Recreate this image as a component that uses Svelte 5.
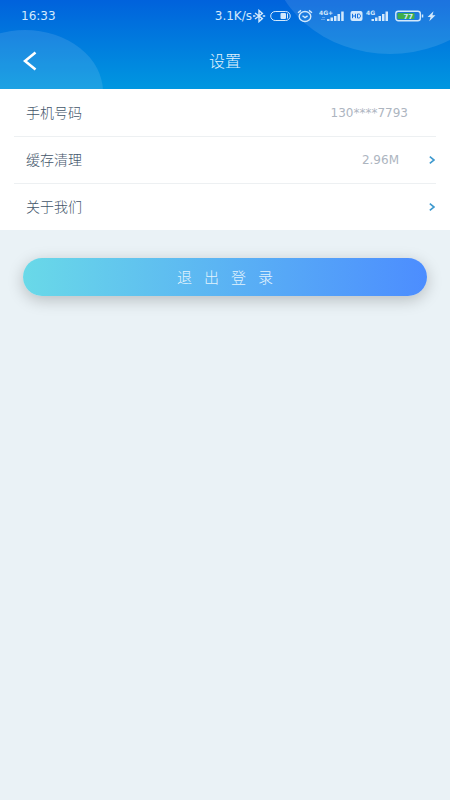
<script lang="ts">
  type Item = { label: string; value?: string; link: boolean };

  const items: Item[] = [
    { label: '手机号码', value: '130****7793', link: false },
    { label: '缓存清理', value: '2.96M', link: true },
    { label: '关于我们', link: true }
  ];
</script>

<header>
  <div class="status">
    <span>16:33</span>
    <div class="status-right">
      <span>3.1K/s</span>
      <svg class="bt" width="14" height="14" viewBox="0 0 14 14" fill="none" stroke="currentColor" stroke-width="1.4">
        <path d="M3 4 L10.4 9.6 L7 12.6 V1.4 L10.4 4.4 L3 10" />
        <path d="M1 7h2.4M10.8 7h2.4" stroke-width="1.6" />
      </svg>
      <svg class="toggle" width="21" height="14" viewBox="0 0 21 14" fill="none" stroke="currentColor">
        <rect x="0.7" y="2.5" width="19.5" height="9" rx="4.5" />
        <rect x="10.5" y="4" width="5.5" height="6" rx="1" fill="currentColor" stroke="none" />
        <path d="M17.5 4.5v5" />
      </svg>
      <svg class="alarm" width="16" height="14" viewBox="0 0 16 14" fill="none" stroke="currentColor" stroke-width="1.4">
        <ellipse cx="8" cy="7.5" rx="5.8" ry="5" />
        <path d="M1 3.8 L4 1.4M12 1.4 L15 3.8M5.5 6.8 L8 8.6 L10.6 6.8" />
      </svg>
      <svg class="signal" width="26" height="14" viewBox="0 0 26 14" fill="currentColor">
        <text x="0" y="6" font-size="6" font-weight="bold">4G+</text>
        <path d="M2 10.5h4M3 8.5h3" stroke="currentColor" stroke-width="0.7" opacity="0.5" />
        <path d="M8 10h2.5v2H8zM11.5 8.5H14v3.5h-2.5zM15 7h2.5v5H15zM18.5 5H21v7h-2.5zM22.2 2.5h2.5V12h-2.5z" />
      </svg>
      <svg class="hd" width="13" height="14" viewBox="0 0 13 14">
        <rect x="0.5" y="2" width="12" height="10" rx="2" fill="currentColor" />
        <path d="M2.5 4.8v4.4M5.5 4.8v4.4M2.5 7h3M7.5 5v4h1.2c2.4 0 2.4-4 0-4z" fill="none" stroke="#1672df" />
      </svg>
      <svg class="signal2" width="23" height="14" viewBox="0 0 23 14" fill="currentColor">
        <text x="0" y="6" font-size="6" font-weight="bold">4G</text>
        <path d="M5.5 10H8v2H5.5zM9 8.5h2.5v3.5H9zM12.5 7H15v5h-2.5zM16 5h2.5v7H16zM19.5 2.5H22V12h-2.5z" />
      </svg>
      <svg class="battery" width="29" height="14" viewBox="0 0 29 14" fill="none" stroke="currentColor">
        <rect x="0.8" y="2.3" width="24.5" height="9.4" rx="2.5" stroke-width="1.4" />
        <rect x="2.5" y="4" width="17" height="6" rx="1" fill="#3fae4b" stroke="none" />
        <path d="M27.5 5.5v3" stroke-width="1.5" />
        <text x="8.5" y="9.8" font-size="7" font-weight="bold" fill="currentColor" stroke="none">77</text>
      </svg>
      <svg width="9" height="14" viewBox="0 0 9 14" fill="currentColor">
        <path d="M6.5 2.2 L0.6 7.9 H3.6 L2.3 12.2 L8.5 6.2 H5.4z" />
      </svg>
    </div>
  </div>

  <div class="nav">
    <button class="back" aria-label="返回">
      <svg width="14" height="20" viewBox="0 0 14 20" fill="none" stroke="currentColor" stroke-width="2.6">
        <path d="M12.5 1.5 L2 10 L12.5 18.5" />
      </svg>
    </button>
    <h1>设置</h1>
  </div>
</header>

<main>
  <ul>
    {#each items as item}
      <li>
        {#if item.link}
          <button class="row">
            <span class="label">{item.label}</span>
            {#if item.value}<span class="value">{item.value}</span>{/if}
            <svg class="chevron" width="6" height="8" viewBox="0 0 6 8" fill="none" stroke="currentColor" stroke-width="1.6">
              <path d="M0.8 0.7 L5 4 L0.8 7.3" />
            </svg>
          </button>
        {:else}
          <div class="row plain">
            <span class="label">{item.label}</span>
            <span class="value">{item.value}</span>
          </div>
        {/if}
      </li>
    {/each}
  </ul>

  <button class="logout">退出登录</button>
</main>

<style>
  :global(body) {
    margin: 0;
    background: #eaf2f6;
    font-family: 'DejaVu Sans', 'Noto Sans CJK SC', sans-serif;
  }

  button { border: none; background: none; font: inherit; cursor: pointer; }

  header {
    position: relative; overflow: hidden;
    background: linear-gradient(#0062dc, #0097e0); color: #fff;
  }
  header::before, header::after {
    content: ''; position: absolute; border-radius: 50%;
    background: rgba(255, 255, 255, .11);
  }
  header::before { left: -53px; top: 30px; width: 156px; height: 124px; }
  header::after { right: -60px; top: -154px; width: 240px; height: 208px; }

  .status {
    position: relative; z-index: 1;
    display: flex; justify-content: space-between; align-items: center;
    height: 32px; padding: 0 14px 0 21px;
    font-size: 12px; color: #d3e9fc;
  }
  .status-right { display: flex; align-items: center; }
  .status svg { flex: none; }
  .toggle { margin-left: 4px; }
  .alarm { margin-left: 6px; }
  .signal { margin-left: 6px; }
  .hd { margin-left: 5px; }
  .signal2 { margin-left: 3px; }
  .battery { margin: 0 3px 0 6px; }

  .nav {
    position: relative; z-index: 1;
    display: grid; grid-template-columns: 60px 1fr 60px; align-items: center;
    height: 57px;
  }
  .back { display: flex; padding: 0 0 0 23px; color: #fff; }
  h1 {
    margin: 0; padding-bottom: 2px; text-align: center; color: #e2f3fd;
    font-family: 'Noto Sans CJK SC', sans-serif; font-size: 16px; font-weight: 300;
  }

  ul { list-style: none; margin: 0; padding: 0 14px; background: #fff; }
  li + li { border-top: 1px solid #edf0f2; }
  .row {
    box-sizing: border-box; display: flex; align-items: center;
    width: 100%; height: 46px; padding: 0 1px 0 12px;
  }
  .plain { height: 47px; padding-right: 28px; }
  .label {
    flex: 1; padding-bottom: 2px; text-align: left; color: #43566a;
    font-family: 'Noto Sans CJK SC', sans-serif; font-size: 14px; font-weight: 300;
  }
  .value { font-size: 12px; color: #adb5bf; }
  .chevron { margin-left: 30px; color: #3f9acf; }

  .logout {
    display: block; width: calc(100% - 46px); height: 38px;
    margin: 28px auto; padding: 0 0 2px 12px; border-radius: 19px;
    background: linear-gradient(90deg, #69d9e8, #4c8dff);
    box-shadow: 0 4px 16px rgba(0, 0, 0, .22);
    color: #e2f3fd; font-family: 'Noto Sans CJK SC', sans-serif;
    font-size: 15px; font-weight: 300; letter-spacing: 12px;
  }
</style>
